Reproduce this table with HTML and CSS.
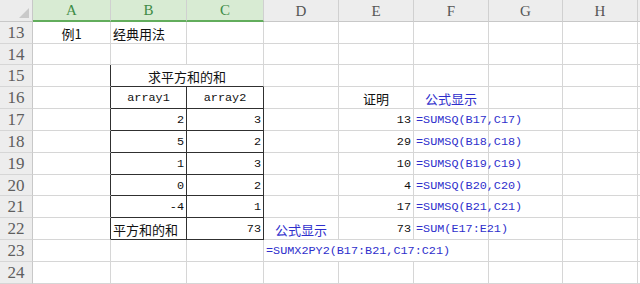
FILE: index.html
```html
<!DOCTYPE html>
<html lang="zh">
<head>
<meta charset="utf-8">
<link rel="stylesheet" href="styles.css">
</head>
<body>
<div class="sheet">
  <!-- header -->
  <div class="corner"><span class="tri"></span></div>
  <div class="ch sel">A</div><div class="ch sel">B</div><div class="ch sel">C</div>
  <div class="ch">D</div><div class="ch">E</div><div class="ch">F</div><div class="ch">G</div><div class="ch">H</div><div class="ch last"></div>

  <!-- 13 -->
  <div class="rh">13</div>
  <div class="c zh center">例1</div><div class="c zh">经典用法</div><div class="c"></div>
  <div class="c"></div><div class="c"></div><div class="c"></div><div class="c"></div><div class="c"></div><div class="c last"></div>

  <!-- 14 -->
  <div class="rh">14</div>
  <div class="c"></div><div class="c"></div><div class="c"></div>
  <div class="c"></div><div class="c"></div><div class="c"></div><div class="c"></div><div class="c"></div><div class="c last"></div>

  <!-- 15 -->
  <div class="rh">15</div>
  <div class="c bR"></div><div class="c zh center span2 bB">求平方和的和</div>
  <div class="c"></div><div class="c"></div><div class="c"></div><div class="c"></div><div class="c"></div><div class="c last"></div>

  <!-- 16 -->
  <div class="rh">16</div>
  <div class="c bR"></div><div class="c mono center bR bB">array1</div><div class="c mono center bR bB">array2</div>
  <div class="c"></div><div class="c zh center">证明</div><div class="c zh center blue">公式显示</div><div class="c"></div><div class="c"></div><div class="c last"></div>

  <!-- 17 -->
  <div class="rh">17</div>
  <div class="c bR"></div><div class="c mono right bR bB">2</div><div class="c mono right bR bB">3</div>
  <div class="c"></div><div class="c mono right">13</div><div class="c mono blue">=SUMSQ(B17,C17)</div><div class="c"></div><div class="c"></div><div class="c last"></div>

  <!-- 18 -->
  <div class="rh">18</div>
  <div class="c bR"></div><div class="c mono right bR bB">5</div><div class="c mono right bR bB">2</div>
  <div class="c"></div><div class="c mono right">29</div><div class="c mono blue">=SUMSQ(B18,C18)</div><div class="c"></div><div class="c"></div><div class="c last"></div>

  <!-- 19 -->
  <div class="rh">19</div>
  <div class="c bR"></div><div class="c mono right bR bB">1</div><div class="c mono right bR bB">3</div>
  <div class="c"></div><div class="c mono right">10</div><div class="c mono blue">=SUMSQ(B19,C19)</div><div class="c"></div><div class="c"></div><div class="c last"></div>

  <!-- 20 -->
  <div class="rh">20</div>
  <div class="c bR"></div><div class="c mono right bR bB">0</div><div class="c mono right bR bB">2</div>
  <div class="c"></div><div class="c mono right">4</div><div class="c mono blue">=SUMSQ(B20,C20)</div><div class="c"></div><div class="c"></div><div class="c last"></div>

  <!-- 21 -->
  <div class="rh">21</div>
  <div class="c bR"></div><div class="c mono right bR bB">-4</div><div class="c mono right bR bB">1</div>
  <div class="c"></div><div class="c mono right">17</div><div class="c mono blue">=SUMSQ(B21,C21)</div><div class="c"></div><div class="c"></div><div class="c last"></div>

  <!-- 22 -->
  <div class="rh">22</div>
  <div class="c bR"></div><div class="c zh bR bB">平方和的和</div><div class="c mono right bR bB">73</div>
  <div class="c zh center blue">公式显示</div><div class="c mono right">73</div><div class="c mono blue">=SUM(E17:E21)</div><div class="c"></div><div class="c"></div><div class="c last"></div>

  <!-- 23 -->
  <div class="rh">23</div>
  <div class="c"></div><div class="c"></div><div class="c"></div>
  <div class="c mono blue span3">=SUMX2PY2(B17:B21,C17:C21)</div><div class="c"></div><div class="c"></div><div class="c last"></div>

  <!-- 24 -->
  <div class="rh">24</div>
  <div class="c"></div><div class="c"></div><div class="c"></div>
  <div class="c"></div><div class="c"></div><div class="c"></div><div class="c"></div><div class="c"></div><div class="c last"></div>
</div>
</body>
</html>
```

FILE: styles.css
```css
html, body {
  margin: 0;
  padding: 0;
  background: #ffffff;
  overflow: hidden;
}

.sheet {
  display: grid;
  grid-template-columns: 33px 78px 76px 77px 75px 75px 75px 74px 75px 1fr;
  grid-template-rows: 22px 22px 21px 22px 22px 22px 22px 22px 21px 22px 22px 22px 22px;
  width: 640px;
}

.sheet > div {
  box-sizing: border-box;
  border-right: 1px solid #d6d6d6;
  border-bottom: 1px solid #d6d6d6;
  display: flex;
  align-items: center;
  white-space: nowrap;
  overflow: visible;
  padding-top: 1px;
}

.sheet > .last {
  border-right: none;
}

.corner {
  background: #ececec;
  position: relative;
  border-right-color: #c8c8c8 !important;
  border-bottom-color: #c8c8c8 !important;
}

.tri {
  position: absolute;
  right: 3px;
  bottom: 3px;
  width: 0;
  height: 0;
  border-left: 10px solid transparent;
  border-bottom: 10px solid #c9c9c9;
}

.ch {
  background: #ededed;
  justify-content: center;
  font-family: "Liberation Serif", serif;
  font-size: 15px;
  color: #555555;
  border-right-color: #d0d0d0 !important;
  border-bottom-color: #c8c8c8 !important;
}

.ch.sel {
  background: #d8ebd3;
  color: #3f8c46;
  border-bottom: 2px solid #62ad5c !important;
}

.rh {
  background: #ededed;
  justify-content: center;
  font-family: "Liberation Serif", serif;
  font-size: 17px;
  color: #5e5e5e;
  border-right-color: #c8c8c8 !important;
  border-bottom-color: #d6d6d6 !important;
}

.c {
  color: #111111;
  padding-left: 2px;
  padding-right: 2px;
}

.mono {
  font-family: "Liberation Mono", monospace;
  font-size: 11.8px;
}

.zh {
  font-family: "Noto Sans CJK SC", sans-serif;
  font-size: 13px;
}

.center {
  justify-content: center;
}

.right {
  justify-content: flex-end;
}

.blue {
  color: #2f2fcc;
}

.span2 {
  grid-column: span 2;
}

.span3 {
  grid-column: span 3;
}

.sheet > .bR {
  border-right-color: #303030;
}

.sheet > .bB {
  border-bottom-color: #303030;
}
```
